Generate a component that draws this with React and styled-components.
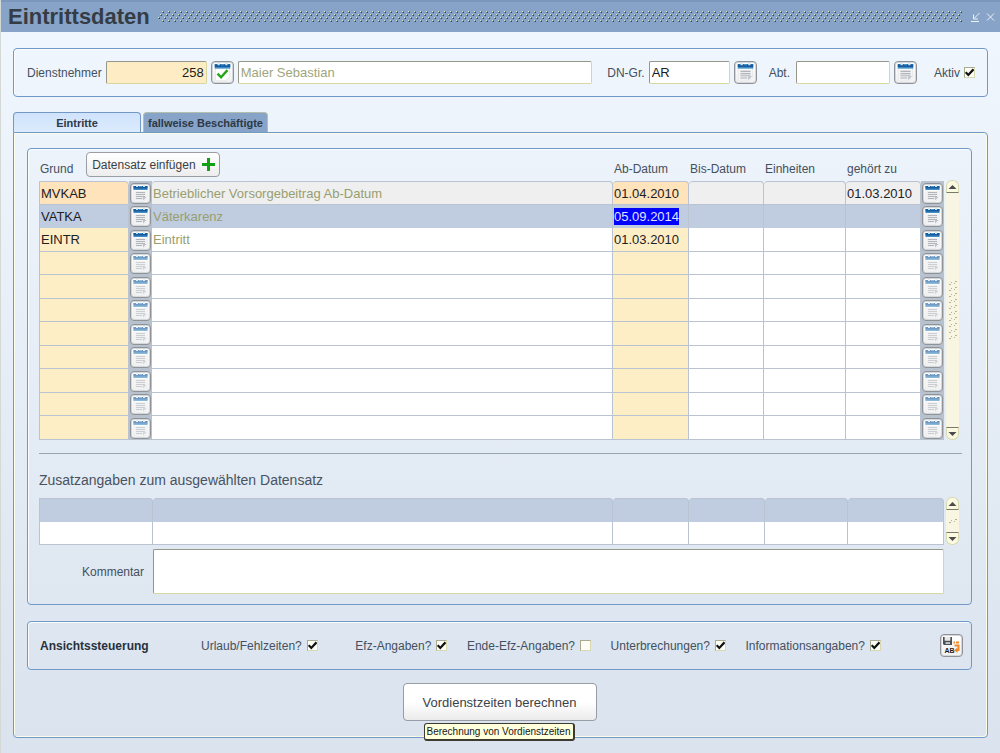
import React, { useEffect, useRef } from "react";
import styled, { createGlobalStyle, css } from "styled-components";

const line = "#7199c8";
const grid = "#b9c3d2";

const GlobalStyle = createGlobalStyle`
  *, *::before, *::after { box-sizing: border-box; }
  body { margin: 0; font-family: "Liberation Sans", Arial, sans-serif; font-size: 12px; color: #44505e; }
  input, button, textarea { font-family: inherit; }
`;

const Window = styled.div`
  min-height: 100vh;
  display: flex;
  flex-direction: column;
  background: linear-gradient(#f1f7fe, #dae3ee);
  border-left: 1px solid #d5d9d6;
`;

const TitleBar = styled.header`
  height: 32px;
  display: flex;
  align-items: center;
  gap: 8px;
  padding: 0 4px 0 7px;
  background: #87a3c7;
  border-top: 2px solid #7c97ba;
`;

const Title = styled.h1`
  margin: 0;
  font-size: 22px;
  line-height: 28px;
  color: #343c45;
`;

const Grip = styled.svg`
  flex: 1;
  min-width: 0;
  height: 12px;
`;

const WindowControls = styled.div`
  display: flex;
  gap: 4px;
`;

const WindowButton = styled.button`
  width: 11px;
  height: 14px;
  padding: 0;
  border: 0;
  background: none;
  color: #eef2f5;
  svg { display: block; }
`;

const Body = styled.main`
  flex: 1;
  display: flex;
  flex-direction: column;
  padding: 16px 12px 15px;
`;

const Panel = styled.section`
  border: 1px solid ${line};
  border-radius: 4px;
  box-shadow: inset 1px 1px 0 #fafdff;
`;

const SearchPanel = styled(Panel)`
  height: 49px;
  display: flex;
  align-items: center;
  padding: 0 12px 0 13px;
`;

const FieldLabel = styled.label`
  white-space: nowrap;
  margin-right: ${(p) => p.$gap || 4}px;
`;

const fieldBorder = css`
  border: 1px solid;
  border-color: #96978a #d6d8a0 #d6d8a0 #96978a;
  border-radius: 2px;
  background: #fff;
`;

const TextField = styled.input`
  ${fieldBorder}
  height: 23px;
  min-width: 0;
  width: ${(p) => p.$width || "auto"};
  flex: ${(p) => (p.$grow ? "1" : "none")};
  margin-right: ${(p) => p.$gap || 4}px;
  padding: 0 2px;
  font-size: 13px;
  outline: 0;
  color: ${(p) => (p.$muted ? "#a0a57c" : "#1c1c1c")};
  background: ${(p) => (p.$required ? "#feedc4" : "#fff")};
  text-align: ${(p) => (p.$right ? "right" : "left")};
`;

const PickButton = styled.button`
  display: block;
  flex: none;
  width: ${(p) => (p.$small ? 21 : 23)}px;
  height: ${(p) => (p.$small ? 21 : 23)}px;
  padding: 0;
  border: 1px solid #8f9397;
  border-radius: 4px;
  background: linear-gradient(#fff, #f1f1f1);
  box-shadow: inset 0 0 0 1px #d5d8db;
  margin-right: ${(p) => p.$gap || 0}px;
  svg {
    display: block;
    width: 100%;
    height: 100%;
    opacity: ${(p) => (p.$faded ? 0.6 : 1)};
  }
`;

const Check = styled.input`
  appearance: none;
  flex: none;
  width: 11px;
  height: 11px;
  margin: 0;
  border: 1px solid;
  border-color: #a9aa92 #d8d9ae #d8d9ae #a9aa92;
  background: #fffef6;
  &:checked {
    background: #fffef6 url("data:image/svg+xml,%3Csvg xmlns='http://www.w3.org/2000/svg' viewBox='0 0 9 9'%3E%3Cpath d='M.7 4.2 3.300 7 8.500 1.300' fill='none' stroke='%23111' stroke-width='2.200'/%3E%3C/svg%3E") center / 9px 9px no-repeat;
  }
`;

const Tabs = styled.nav`
  display: flex;
  align-items: flex-end;
  gap: 2px;
  margin-top: 15px;
`;

const Tab = styled.button`
  width: ${(p) => (p.$active ? 128 : 125)}px;
  height: 20px;
  padding: 0;
  font-size: 11px;
  font-weight: bold;
  line-height: 21px;
  white-space: nowrap;
  color: #2c3947;
  border: 1px solid ${(p) => (p.$active ? line : "#b3bfae")};
  border-bottom: 0;
  border-radius: 4px 4px 0 0;
  background: ${(p) => (p.$active ? "linear-gradient(#cfe3fb, #dcebfd)" : "#87a3c7")};
`;

const TabPage = styled.div`
  flex: 1;
  display: flex;
  flex-direction: column;
  padding: 15px 15px 15px 13px;
  border: 1px solid ${line};
  border-radius: 0 4px 4px 4px;
  box-shadow: inset 1px 1px 0 #fbfde9, inset -1px -1px 0 #fbfde9;
`;

const RecordsPanel = styled(Panel)`
  padding: 2px 9px 10px 11px;
`;

const GridRow = styled.div`
  display: flex;
  align-items: flex-end;
  gap: 2px;
  padding-right: 3px;
`;

const Table = styled.table`
  flex: 1;
  min-width: 0;
  width: 100%;
  table-layout: fixed;
  border-collapse: separate;
  border-spacing: 0;
`;

const HeadCell = styled.th`
  height: 30px;
  padding: 0 0 5px 1px;
  font-weight: normal;
  text-align: left;
  vertical-align: bottom;
  white-space: nowrap;
  line-height: 14px;
`;

const GrundHead = styled.div`
  display: flex;
  align-items: flex-end;
  gap: 13px;
  margin-bottom: -1px;
  span { line-height: 15px; }
`;

const InsertButton = styled.button`
  display: flex;
  align-items: center;
  justify-content: center;
  gap: 6px;
  width: 134px;
  height: 25px;
  padding: 0;
  border: 1px solid #9a9ea2;
  border-radius: 4px;
  background: linear-gradient(#fff, #ededed);
  font-size: 12px;
  color: #3a3f45;
  white-space: nowrap;
`;

const tones = {
  plain: ["#fff", "#feeec5"],
  locked: ["#efefef", "#fee3bb"],
  current: ["#c0cde0", "#c0cde0"],
};

const Row = styled.tr`
  height: 23px;
  &:nth-child(odd) { height: 24px; }
  td { background: ${(p) => tones[p.$tone][0]}; }
  td[data-kind="key"] { background: ${(p) => tones[p.$tone][1]}; }
  td[data-kind="pick"] { background: #b8c2cf; }
  ${(p) => p.$tone === "current" && css`td { border-bottom-color: #c0cde0; }`}
`;

const Cell = styled.td`
  padding: 0;
  height: inherit;
  border-right: 1px solid ${grid};
  border-bottom: 1px solid ${grid};
  &:first-child { border-left: 1px solid ${grid}; }
  tr:first-child & {
    border-top: 1px solid ${grid};
    border-radius: 4px 4px 0 0;
  }
  tr:first-child &:first-child { border-top-left-radius: 0; }
  &[data-kind="pick"], tr:first-child &[data-kind="pick"] {
    border: 0;
    border-radius: 0;
    padding-left: 1px;
  }
`;

const CellInput = styled.input`
  display: block;
  width: 100%;
  height: 17px;
  padding: 0 0 0 1px;
  border: 0;
  outline: 0;
  background: none;
  font-size: 13px;
  line-height: 17px;
  color: ${(p) => (p.$muted ? "#989e70" : "#1d2024")};
  caret-color: transparent;
  &::selection { background: #0000ff; color: #e0e4ff; }
`;

const ScrollBar = styled.div`
  width: 13px;
  height: ${(p) => p.$height}px;
  display: flex;
  flex-direction: column;
  align-items: stretch;
  background: #f8f6e2;
  border-radius: 6px;
`;

const ScrollButton = styled.button`
  height: 13px;
  padding: 0;
  border: 1px solid #d6d8b4;
  background: #fbfae0;
  border-radius: ${(p) => (p.$down ? "0 0 6px 6px" : "6px 6px 0 0")};
  ${(p) => (p.$down ? "border-top-color: #77796a;" : "border-bottom-color: #77796a;")}
  svg { display: block; margin: 0 auto; }
`;

const ScrollThumb = styled.div`
  flex: 1;
  display: flex;
  align-items: center;
  justify-content: center;
`;

const Divider = styled.hr`
  width: 100%;
  height: 1px;
  margin: 13px 0 17px;
  border: 0;
  background: #98a5b3;
`;

const SubTitle = styled.h2`
  margin: 0 0 8px;
  font-size: 14px;
  font-weight: normal;
  line-height: 18px;
  color: #48535f;
`;

const CommentRow = styled.div`
  display: flex;
  align-items: center;
  margin-top: 4px;
  padding-right: 18px;
`;

const CommentLabel = styled.label`
  width: 114px;
  padding-right: 9px;
  text-align: right;
`;

const Comment = styled.textarea`
  ${fieldBorder}
  display: block;
  flex: 1;
  height: 45px;
  resize: none;
`;

const ViewPanel = styled(Panel)`
  height: 49px;
  display: flex;
  align-items: center;
  margin-top: 16px;
  padding: 0 8px 0 12px;
`;

const ViewTitle = styled.h2`
  width: 161px;
  margin: 0;
  font-size: 12px;
  color: #27313d;
`;

const Options = styled.div`
  flex: 1;
  display: flex;
  justify-content: space-between;
  max-width: 680px;
`;

const Option = styled.label`
  display: flex;
  align-items: center;
  gap: 5px;
  white-space: nowrap;
  &:first-child { margin-right: 18px; }
`;

const SaveButton = styled(PickButton)`
  margin-left: auto;
`;

const ActionArea = styled.div`
  position: relative;
  align-self: center;
  margin-top: 13px;
`;

const ActionButton = styled.button`
  width: 194px;
  height: 38px;
  border: 1px solid #989da3;
  border-radius: 4px;
  background: linear-gradient(#fff 50%, #ebebeb);
  font-size: 13px;
  color: #3b4148;
  white-space: nowrap;
`;

const Tooltip = styled.div`
  position: absolute;
  top: 40px;
  left: 21px;
  height: 18px;
  padding: 0 2px;
  border: 1px solid #3b3b32;
  border-width: 1px 2px 2px 1px;
  border-radius: 3px;
  background: #ffffdc;
  font-size: 10px;
  line-height: 15px;
  white-space: nowrap;
  color: #16161e;
`;

function ListIcon({ checked }) {
  return (
    <svg viewBox="0 0 19 19" aria-hidden="true">
      <path d="M3 5h13v8.500l-3.500 3.500H3z" fill="#fff" stroke="#e3e5e8" strokeWidth=".8" />
      <path d="M2.500 2h14v4h-14z" fill="#3f8cc6" />
      <path d="M2.500 2h14v2.500h-14z" fill="#155a9c" />
      <path d="M5 1h2v2H5zM12 1h2v2h-2z" fill="#d3e6f5" />
      <path d="M8 2h3v1H8z" fill="#4f9bd3" />
      {checked ? (
        <path d="M5 10.500 8.200 13.800 14 7.300" fill="none" stroke="#27a51d" strokeWidth="2.200" />
      ) : (
        <>
          <path d="M4 7h11v6l-3 3H4z" fill="#eceef0" />
          <path d="M5 8.500h9M5 10.500h9M5 12.500h9M5 14.500h6" stroke="#b1b5ba" />
          <path d="M15.500 13l-3.500 3.500V13z" fill="#bfc3c8" />
        </>
      )}
    </svg>
  );
}

function SaveIcon() {
  return (
    <svg viewBox="0 0 21 21" aria-hidden="true">
      <path d="M2 2h1.800v3.500h5.400V2H11v8H3L2 9z" fill="#4c4f53" />
      <path d="M3.800 2h5.400v3.500H3.800z" fill="#e6e7e8" />
      <path d="M4.500 7.200h4.500V9H4.500z" fill="#c9cbcd" />
      <path d="M12.500 7.500h1.500M15 7.500h3M13.500 10.500h4v4.500h-1.500" fill="none" stroke="#f08a2c" strokeWidth="2" />
      <path d="M16.500 12.500v5.500l-3.300-2.800z" fill="#f08a2c" />
      <text x="3.500" y="18" fontSize="7" fontWeight="bold" fill="#1d1d1d">AB</text>
    </svg>
  );
}

function DotGrip() {
  return (
    <Grip aria-hidden="true">
      <defs>
        <pattern id="grip" width="6" height="12" patternUnits="userSpaceOnUse">
          {[[4, 0], [2, 3], [0, 6], [4, 9]].map(([x, y]) => (
            <g key={y}>
              <rect x={x} y={y} width="2" height="2" fill="#5f7f92" />
              <rect x={x} y={y} width="1" height="1" fill="#e6edd6" />
              <rect x={x + 1} y={y + 1} width="1" height="1" fill="#2f4a5c" />
            </g>
          ))}
        </pattern>
      </defs>
      <rect width="100%" height="12" fill="url(#grip)" />
    </Grip>
  );
}

function Scroll({ height, dots }) {
  return (
    <ScrollBar $height={height}>
      <ScrollButton aria-label="Nach oben">
        <svg width="9" height="6" viewBox="0 0 9 6"><path d="M4.500 1 8.500 5h-8z" fill="#4b4b4b" /></svg>
      </ScrollButton>
      <ScrollThumb>
        <svg width="9" height={dots * 6} aria-hidden="true">
          {Array.from({ length: dots }, (_, i) => (
            <path key={i} d={`M1 ${i * 6 + 4.5}h2M3 ${i * 6 + 2.5}h1M6 ${i * 6 + 3.5}h1M7 ${i * 6 + 1.5}h2`} stroke="#b2b199" />
          ))}
        </svg>
      </ScrollThumb>
      <ScrollButton $down aria-label="Nach unten">
        <svg width="9" height="6" viewBox="0 0 9 6"><path d="M4.500 5 8.500 1h-8z" fill="#4b4b4b" /></svg>
      </ScrollButton>
    </ScrollBar>
  );
}

const records = [
  { tone: "locked", grund: "MVKAB", text: "Betrieblicher Vorsorgebeitrag Ab-Datum", ab: "01.04.2010", zu: "01.03.2010" },
  { tone: "current", grund: "VATKA", text: "Väterkarenz", ab: "05.09.2014" },
  { tone: "plain", grund: "EINTR", text: "Eintritt", ab: "01.03.2010" },
  ...Array.from({ length: 8 }, () => ({ tone: "plain", empty: true })),
];

const options = [
  ["Urlaub/Fehlzeiten?", true],
  ["Efz-Angaben?", true],
  ["Ende-Efz-Angaben?", false],
  ["Unterbrechungen?", true],
  ["Informationsangaben?", true],
];

const Col = styled.col`
  width: ${(p) => (p.$width ? `${p.$width}px` : "auto")};
`;

function Columns({ widths }) {
  return (
    <colgroup>
      {widths.map((w, i) => <Col key={i} $width={w} />)}
    </colgroup>
  );
}

function RecordTable() {
  const current = useRef(null);
  useEffect(() => {
    current.current.focus();
    current.current.select();
  }, []);
  return (
    <Table>
      <Columns widths={[90, 23, 0, 76, 75, 82, 75, 23]} />
      <thead>
        <tr>
          <HeadCell colSpan={3}>
            <GrundHead>
              <span>Grund</span>
              <InsertButton>
                Datensatz einfügen
                <svg width="13" height="13" viewBox="0 0 13 13" aria-hidden="true">
                  <path d="M6.500 0v13M0 6.500h13" stroke="#14a014" strokeWidth="3" />
                </svg>
              </InsertButton>
            </GrundHead>
          </HeadCell>
          <HeadCell>Ab-Datum</HeadCell>
          <HeadCell>Bis-Datum</HeadCell>
          <HeadCell>Einheiten</HeadCell>
          <HeadCell colSpan={2}>gehört zu</HeadCell>
        </tr>
      </thead>
      <tbody>
        {records.map((r, i) => (
          <Row key={i} $tone={r.tone}>
            <Cell data-kind="key"><CellInput aria-label="Grund" defaultValue={r.grund} /></Cell>
            <Cell data-kind="pick"><PickButton $small $faded={r.empty} aria-label="Grund auswählen"><ListIcon /></PickButton></Cell>
            <Cell><CellInput $muted aria-label="Bezeichnung" defaultValue={r.text} readOnly /></Cell>
            <Cell data-kind="key">
              <CellInput ref={r.tone === "current" ? current : undefined} aria-label="Ab-Datum" defaultValue={r.ab} />
            </Cell>
            <Cell><CellInput aria-label="Bis-Datum" /></Cell>
            <Cell><CellInput aria-label="Einheiten" /></Cell>
            <Cell><CellInput aria-label="gehört zu" defaultValue={r.zu} /></Cell>
            <Cell data-kind="pick"><PickButton $small $faded={r.empty} aria-label="Zuordnung auswählen"><ListIcon /></PickButton></Cell>
          </Row>
        ))}
      </tbody>
    </Table>
  );
}

function DetailTable() {
  return (
    <Table aria-label="Zusatzangaben">
      <Columns widths={[114, 0, 76, 76, 83, 96]} />
      <tbody>
        {["current", "plain"].map((tone) => (
          <Row key={tone} $tone={tone}>
            {[1, 2, 3, 4, 5, 6].map((n) => (
              <Cell key={n}><CellInput aria-label={`Zusatzangabe ${n}`} /></Cell>
            ))}
          </Row>
        ))}
      </tbody>
    </Table>
  );
}

export default function App() {
  return (
    <Window>
      <GlobalStyle />
      <TitleBar>
        <Title>Eintrittsdaten</Title>
        <DotGrip />
        <WindowControls>
          <WindowButton aria-label="Minimieren">
            <svg width="11" height="14" viewBox="0 0 11 14">
              <path d="M9.500 3 4 8.500M3.500 4.500v4.500h4.500M1 11.500h8" fill="none" stroke="currentColor" />
            </svg>
          </WindowButton>
          <WindowButton aria-label="Schließen">
            <svg width="11" height="14" viewBox="0 0 11 14">
              <path d="M2 3.500l7 7M9 3.500l-7 7" fill="none" stroke="currentColor" />
            </svg>
          </WindowButton>
        </WindowControls>
      </TitleBar>
      <Body>
        <SearchPanel>
          <FieldLabel htmlFor="dn">Dienstnehmer</FieldLabel>
          <TextField id="dn" $width="101px" $required $right defaultValue="258" />
          <PickButton $gap={4} aria-label="Dienstnehmer auswählen"><ListIcon checked /></PickButton>
          <TextField $grow $muted $gap={15} aria-label="Name" defaultValue="Maier Sebastian" />
          <FieldLabel htmlFor="gr">DN-Gr.</FieldLabel>
          <TextField id="gr" $width="81px" defaultValue="AR" />
          <PickButton $gap={12} aria-label="Gruppe auswählen"><ListIcon /></PickButton>
          <FieldLabel htmlFor="abt" $gap={6}>Abt.</FieldLabel>
          <TextField id="abt" $width="94px" />
          <PickButton $gap={17} aria-label="Abteilung auswählen"><ListIcon /></PickButton>
          <FieldLabel htmlFor="aktiv">Aktiv</FieldLabel>
          <Check id="aktiv" type="checkbox" defaultChecked />
        </SearchPanel>
        <Tabs>
          <Tab $active>Eintritte</Tab>
          <Tab>fallweise Beschäftigte</Tab>
        </Tabs>
        <TabPage>
          <RecordsPanel>
            <GridRow>
              <RecordTable />
              <Scroll height={260} dots={10} />
            </GridRow>
            <Divider />
            <SubTitle>Zusatzangaben zum ausgewählten Datensatz</SubTitle>
            <GridRow>
              <DetailTable />
              <Scroll height={48} dots={1} />
            </GridRow>
            <CommentRow>
              <CommentLabel htmlFor="kommentar">Kommentar</CommentLabel>
              <Comment id="kommentar" />
            </CommentRow>
          </RecordsPanel>
          <ViewPanel>
            <ViewTitle>Ansichtssteuerung</ViewTitle>
            <Options>
              {options.map(([label, on]) => (
                <Option key={label}>{label}<Check type="checkbox" defaultChecked={on} /></Option>
              ))}
            </Options>
            <SaveButton aria-label="Ansicht speichern"><SaveIcon /></SaveButton>
          </ViewPanel>
          <ActionArea>
            <ActionButton aria-describedby="tip">Vordienstzeiten berechnen</ActionButton>
            <Tooltip id="tip" role="tooltip">Berechnung von Vordienstzeiten</Tooltip>
          </ActionArea>
        </TabPage>
      </Body>
    </Window>
  );
}
